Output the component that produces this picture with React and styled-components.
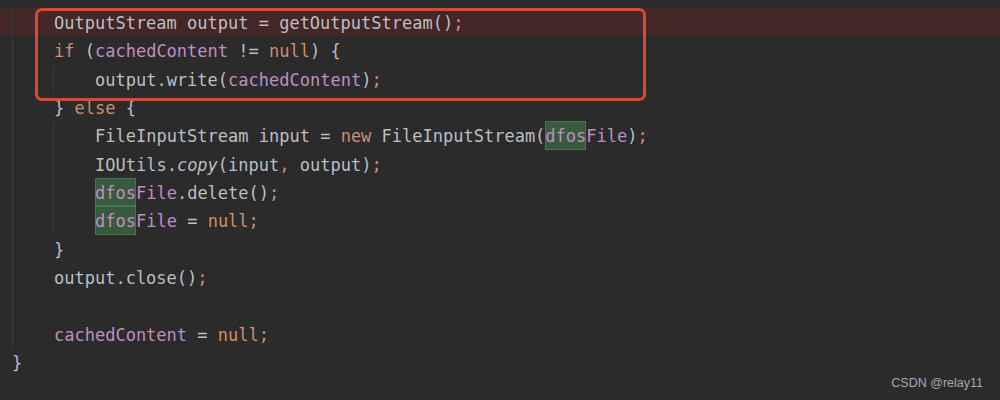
import styled, { createGlobalStyle } from "styled-components";

const Global = createGlobalStyle`
  html {
    background: #2b2b2b;
  }
  body {
    margin: 0;
  }
`;

const Page = styled.div`
  position: relative;
  width: 1000px;
  height: 400px;
  overflow: hidden;
  padding: 8px 0 0 12px;
  box-sizing: border-box;
  font-family: "DejaVu Sans Mono", "Liberation Mono", monospace;
  font-size: 17px;
  color: #bcbec4;
`;

const Block = styled.div`
  border-left: 1px solid #393939;
  margin-left: ${(p) => (p.$inner ? "-1px" : "0")};
  padding-left: 41px;
`;

const Line = styled.div`
  position: relative;
  height: 28.35px;
  line-height: 30px;
  white-space: pre;

  ${(p) =>
    p.$hl &&
    `
    &::before {
      content: '';
      position: absolute;
      top: 0;
      bottom: 0;
      left: -60px;
      right: 0;
      background: rgba(92, 34, 34, 0.5);
      z-index: -1;
    }
  `}
`;

const Kw = styled.span`
  color: #cf8e6d;
`;

const Field = styled.span`
  color: #c28dc3;
`;

const Ital = styled.span`
  font-style: italic;
`;

const Match = styled.span`
  display: inline-block;
  height: 28.35px;
  line-height: 30px;
  vertical-align: top;
  background: #375a3d;
  box-shadow: inset 0 0 0 1px #4a7451;
`;

const Frame = styled.div`
  position: absolute;
  left: 35px;
  top: 8px;
  width: 611px;
  height: 93px;
  box-sizing: border-box;
  border: 3.5px solid #e4442f;
  border-radius: 7px;
  pointer-events: none;
`;

const Mark = styled.div`
  position: absolute;
  right: 17px;
  bottom: 9px;
  font-family: "Liberation Sans", Arial, sans-serif;
  font-size: 12.5px;
  line-height: 16px;
  color: #a8a8a8;
`;

export default function App() {
  return (
    <Page>
      <Global />
      <Block>
        <Line $hl>
          OutputStream output = getOutputStream()<Kw>;</Kw>
        </Line>
        <Line>
          <Kw>if</Kw> (<Field>cachedContent</Field> != <Kw>null</Kw>) {"{"}
        </Line>
        <Block $inner>
          <Line>
            output.write(<Field>cachedContent</Field>)<Kw>;</Kw>
          </Line>
        </Block>
        <Line>
          {"} "}
          <Kw>else</Kw> {"{"}
        </Line>
        <Block $inner>
          <Line>
            FileInputStream input = <Kw>new</Kw> FileInputStream(
            <Field>
              <Match>dfos</Match>File
            </Field>
            )<Kw>;</Kw>
          </Line>
          <Line>
            IOUtils.<Ital>copy</Ital>(input<Kw>,</Kw> output)<Kw>;</Kw>
          </Line>
          <Line>
            <Field>
              <Match>dfos</Match>File
            </Field>
            .delete()<Kw>;</Kw>
          </Line>
          <Line>
            <Field>
              <Match>dfos</Match>File
            </Field>{" "}
            = <Kw>null;</Kw>
          </Line>
        </Block>
        <Line>{"}"}</Line>
        <Line>
          output.close()<Kw>;</Kw>
        </Line>
        <Line> </Line>
        <Line>
          <Field>cachedContent</Field> = <Kw>null;</Kw>
        </Line>
      </Block>
      <Line>{"}"}</Line>
      <Frame />
      <Mark>CSDN @relay11</Mark>
    </Page>
  );
}
